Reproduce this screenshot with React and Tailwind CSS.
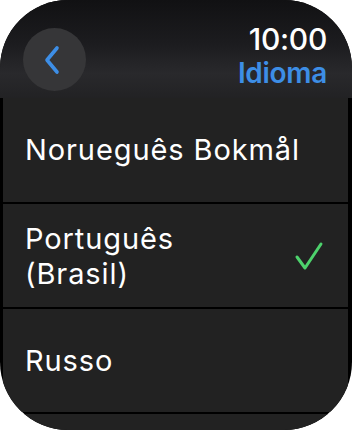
import React from "react";

export default function App() {
  const font = { fontFamily: "Inter, 'Noto Sans', sans-serif" };
  return (
    <div className="w-[352px] h-[430px] bg-white" style={font}>
      <div className="w-[352px] h-[430px] rounded-[68px] bg-black overflow-hidden flex flex-col">
        <div className="relative h-[98px] shrink-0 bg-[linear-gradient(180deg,#111113_0%,#1c1c1f_45%,#29292c_75%,#222224_100%)] flex items-start justify-between pl-[23px] pr-[25px]">
          <div className="mt-[28px] w-[63px] h-[63px] rounded-full bg-[#363638] flex items-center justify-center">
            <svg width="20" height="30" viewBox="0 0 20 30" className="ml-[-4px]">
              <path d="M14 3 L4 15 L14 27" fill="none" stroke="#3d8ee6" strokeWidth="3.6" strokeLinecap="round" strokeLinejoin="round" />
            </svg>
          </div>
          <div className="flex flex-col items-end mt-[22px]">
            <div className="text-white text-[30px] leading-[34px] font-medium tracking-[-0.3px]">10:00</div>
            <div className="text-[#3d8ee6] text-[28px] leading-[34px] font-semibold mt-[0px] tracking-[-0.3px]">Idioma</div>
          </div>
        </div>
        <div className="flex flex-col gap-[2px] pl-[3px] pr-[4px]">
          <div className="h-[104px] bg-[#222222] flex items-center pl-[22px]">
            <span className="text-white text-[29px] leading-[34px] tracking-[0.9px]">Norueguês Bokmål</span>
          </div>
          <div className="h-[103px] bg-[#222222] flex items-center justify-between pl-[22px] pr-[24px]">
            <span className="text-white text-[29px] leading-[35px] tracking-[0.9px]">Português<br />(Brasil)</span>
            <svg width="30" height="32" viewBox="0 0 30 32">
              <path d="M3 17 L11 28 L27 4" fill="none" stroke="#4dd26c" strokeWidth="3" strokeLinecap="round" strokeLinejoin="round" />
            </svg>
          </div>
          <div className="h-[103px] bg-[#222222] flex items-center pl-[22px]">
            <span className="text-white text-[29px] leading-[34px] tracking-[0.9px]">Russo</span>
          </div>
          <div className="h-[40px] bg-[#222222]" />
        </div>
      </div>
    </div>
  );
}
